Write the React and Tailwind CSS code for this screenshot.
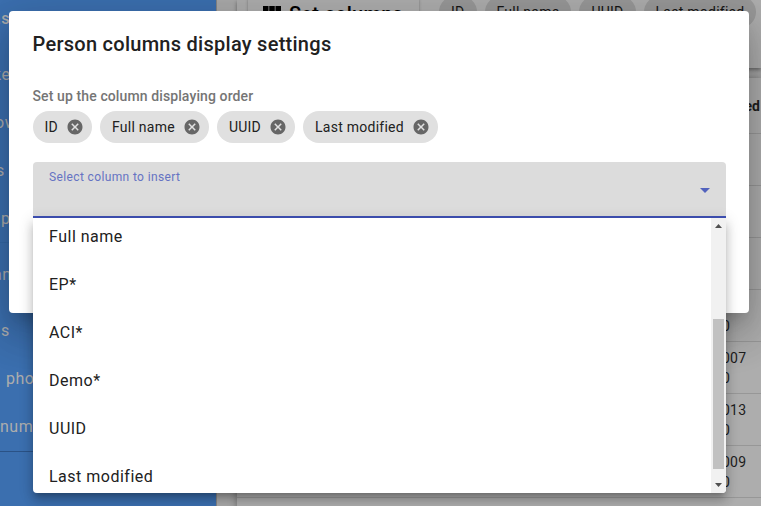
import React from 'react';

const navItems = [
  { label: 'as', cls: 'h-[56px] pt-[9px] -ml-[8px] font-medium' },
  { label: 'ke', cls: 'h-[48px] pt-[9px] -ml-[7px]' },
  { label: 'ow', cls: 'h-[48px] pt-[9px] -ml-[5px]' },
  { label: 's', cls: 'h-[48px] pt-[9px] -ml-[4px]' },
  { label: 'p', cls: 'h-[43px] pt-[9px] pl-[1px] border-b border-[#356aa8]' },
  { label: 'an', cls: 'h-[61px] pt-[22px] -ml-[7px]' },
  { label: 's', cls: 'h-[48px] pt-[17px] ml-[1px]' },
  { label: 'pho', cls: 'h-[48px] pt-[17px] ml-[6px]' },
  { label: 'num', cls: 'h-[48px] pt-[17px]' },
];

const chips = ['ID', 'Full name', 'UUID', 'Last modified'];
const options = ['Full name', 'EP*', 'ACI*', 'Demo*', 'UUID', 'Last modified'];
const rows = ['011', '012', '010', '008', '007', '013', '009', '014'];

function CancelIcon() {
  return (
    <svg viewBox="0 0 24 24" className="h-[18px] w-[18px] shrink-0 fill-[#666]">
      <path d="M12 2C6.47 2 2 6.47 2 12s4.470 10 10 10 10-4.470 10-10S17.530 2 12 2zm5 13.590L15.590 17 12 13.410 8.410 17 7 15.590 10.590 12 7 8.410 8.410 7 12 10.590 15.590 7 17 8.410 13.410 12 17 15.590z" />
    </svg>
  );
}

function Sidebar() {
  return (
    <nav className="flex h-full w-[216px] shrink-0 flex-col bg-[#3b6faf] text-[16px] leading-[20px] tracking-[0.5px] text-[#adadad]">
      {navItems.map((item, i) => (
        <div key={i} className={`${item.cls} shrink-0`}>{item.label}</div>
      ))}
      <div className="h-[4px] border-b border-[#2a5286]" />
    </nav>
  );
}

function Page() {
  return (
    <div className="flex h-full">
      <Sidebar />
      <main className="flex min-w-0 flex-1 flex-col border-l border-[#858585] bg-[#a9a9a9] pl-[20px]">
        <div className="h-[68px] shrink-0 bg-[#adadad] pl-[11px] shadow-[0_2px_4px_rgba(0,0,0,0.4)]">
          <div className="-mt-[4px] flex">
            <div className="flex h-[36px] w-[171px] shrink-0 items-center rounded-[4px] pl-[15px] text-[20px] font-medium text-black shadow-[0_1px_3px_rgba(0,0,0,0.3)]">
              <svg viewBox="0 0 18 18" className="h-[18px] w-[18px] fill-black"><path d="M0 1h5.500v7H0zM6.250 1h5.500v7h-5.500zM12.500 1H18v7h-5.500zM0 9.500h5.500v7H0zM6.250 9.500h5.500v7h-5.500zM12.500 9.500H18v7h-5.500z" /></svg>
              <span className="ml-[8px] whitespace-nowrap tracking-[0.25px]">Set columns</span>
            </div>
            <div className="ml-[20px] flex gap-2">
              {chips.map((c) => (
                <span key={c} className="flex h-[32px] items-center whitespace-nowrap rounded-full bg-[#989898] px-[12px] text-[14px] tracking-[0.25px] text-[#151515]">{c}</span>
              ))}
            </div>
          </div>
        </div>
        <div className="mt-[10px] flex-1 bg-[#adadad] pl-[485px] text-[14px] leading-[20px] text-[#1d1d1d] shadow-[0_1px_8px_rgba(0,0,0,0.35)]">
          <div className="flex h-[56px] items-center justify-end border-b border-[#989898] pr-[1px] text-[14px] font-bold">modified</div>
          {rows.map((r) => (
            <div key={r} className="-ml-[485px] h-[52px] border-b border-[#979797] pl-[485px] pt-[6px] tracking-[0.25px]">
              <div>{r}</div>
              <div>0</div>
            </div>
          ))}
        </div>
      </main>
    </div>
  );
}

function Menu() {
  return (
    <div className="absolute left-[33px] top-[218px] flex h-[275px] w-[693px] overflow-hidden rounded-b-[4px] bg-white">
      <ul className="-mt-[5px] flex-1">
        {options.map((o) => (
          <li key={o} className="flex h-[48px] items-center pl-[16px] text-[16px] tracking-[0.5px] text-[#212121]">{o}</li>
        ))}
      </ul>
      <div className="flex w-[15px] flex-col items-center bg-[#f1f1f1]">
        <svg viewBox="0 0 15 15" className="h-[15px] w-[15px] fill-[#505050]"><path d="M4 10l3.500-4L11 10z" /></svg>
        <div className="mt-[86px] h-[150px] w-[11px] bg-[#c1c1c1]" />
        <svg viewBox="0 0 15 15" className="mt-auto h-[15px] w-[15px] fill-[#505050]"><path d="M4 5l3.500 4L11 5z" /></svg>
      </div>
    </div>
  );
}

function Dialog() {
  return (
    <section className="absolute left-[9px] top-[11px] h-[302px] w-[740px] rounded-[4px] bg-white pl-[23.5px] shadow-[0_11px_15px_-7px_rgba(0,0,0,0.2),0_24px_38px_3px_rgba(0,0,0,0.14),0_9px_46px_8px_rgba(0,0,0,0.12)]">
      <h2 className="pt-[17px] text-[20px] font-medium leading-[32px] tracking-[0.27px] text-[#212121]">Person columns display settings</h2>
      <p className="mt-[26px] text-[14px] font-medium leading-[20px] tracking-[0.11px] text-[#757575]">Set up the column displaying order</p>
      <div className="mt-[5px] flex gap-2">
        {chips.map((c) => (
          <span key={c} className="flex h-[32px] items-center whitespace-nowrap rounded-full bg-[#e0e0e0] pl-[12px] pr-[8px] text-[14px] tracking-[0.25px] text-[#212121]">
            <span className="mr-[8px]">{c}</span>
            <CancelIcon />
          </span>
        ))}
      </div>
      <div className="ml-[0.5px] mt-[19px] flex h-[56px] w-[693px] justify-between rounded-t-[4px] border-b-2 border-[#3f51b5] bg-[#dcdcdc] pl-[16px]">
        <span className="pt-[7px] text-[12px] leading-[16px] tracking-[0.37px] text-[#6573c3]">Select column to insert</span>
        <svg viewBox="0 0 24 24" className="mr-[9px] mt-[16px] h-[24px] w-[24px] fill-[#5262bd]"><path d="M7 10l5 5 5-5z" /></svg>
      </div>
    </section>
  );
}

export default function App() {
  return (
    <div className="relative h-[506px] w-[761px] overflow-hidden font-['Roboto',sans-serif]">
      <Page />
      <Dialog />
      <div className="absolute left-[33px] top-[218px] h-[275px] w-[693px] rounded-b-[4px] shadow-[0_5px_5px_-3px_rgba(0,0,0,0.2),0_8px_10px_1px_rgba(0,0,0,0.14),0_3px_14px_2px_rgba(0,0,0,0.12)]" />
      <Menu />
    </div>
  );
}
